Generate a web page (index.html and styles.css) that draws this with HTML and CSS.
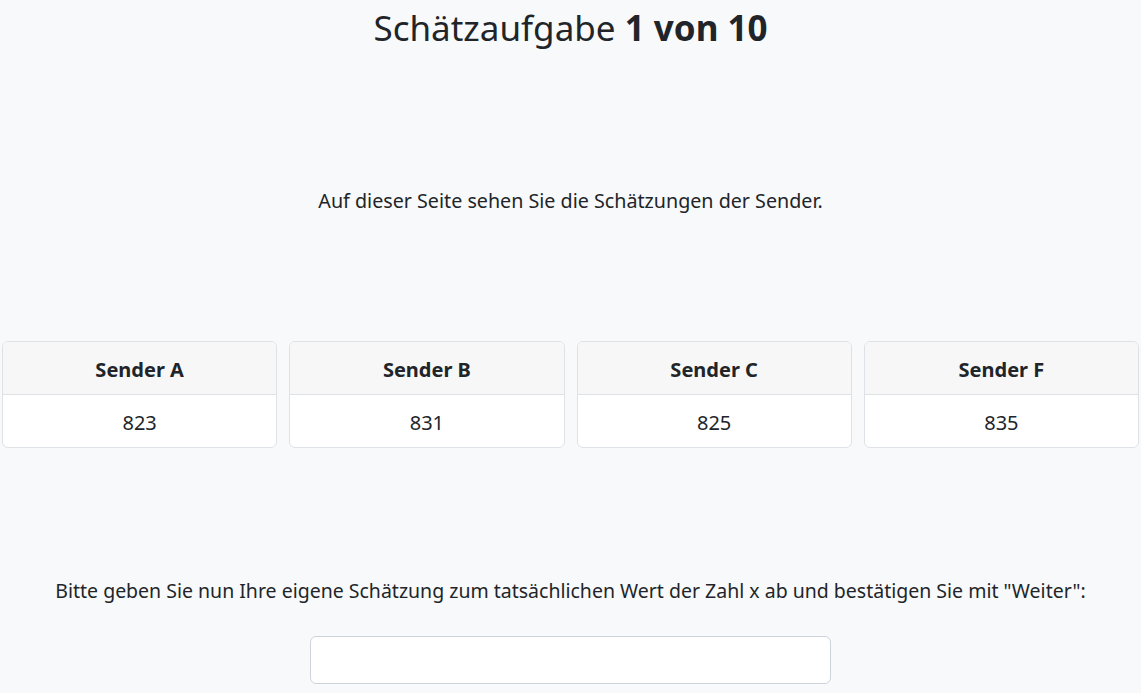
FILE: index.html
```html
<!DOCTYPE html>
<html lang="de">
<head>
<meta charset="utf-8">
<title>Schätzaufgabe</title>
<link rel="stylesheet" href="styles.css">
</head>
<body>
<main class="page">
  <h1 class="title">Schätzaufgabe <b>1 von 10</b></h1>
  <p class="intro">Auf dieser Seite sehen Sie die Schätzungen der Sender.</p>
  <div class="cards">
    <div class="card"><div class="card-head">Sender A</div><div class="card-body">823</div></div>
    <div class="card"><div class="card-head">Sender B</div><div class="card-body">831</div></div>
    <div class="card"><div class="card-head">Sender C</div><div class="card-body">825</div></div>
    <div class="card"><div class="card-head">Sender F</div><div class="card-body">835</div></div>
  </div>
  <p class="prompt">Bitte geben Sie nun Ihre eigene Schätzung zum tatsächlichen Wert der Zahl x ab und bestätigen Sie mit "Weiter":</p>
  <div class="field"><input class="input" type="text"></div>
</main>
</body>
</html>
```
FILE: styles.css
```css
html, body {
  margin: 0;
  padding: 0;
  background: #f8f9fa;
  color: #212529;
  font-family: "Noto Sans", "Open Sans", sans-serif;
}
.page {
  display: flex;
  flex-direction: column;
  align-items: stretch;
  padding: 0 2px;
}
.title {
  margin: 6px 0 0;
  text-align: center;
  font-size: 35px;
  font-weight: 400;
  line-height: 43px;
}
.title b { font-weight: 700; }
.intro {
  margin: 137px 0 0;
  text-align: center;
  font-size: 19.7px;
  line-height: 30px;
}
.cards {
  margin-top: 125px;
  display: grid;
  grid-template-columns: repeat(4, 1fr);
  gap: 12px;
}
.card {
  background: #fff;
  border: 1px solid #dee2e6;
  border-radius: 6px;
  overflow: hidden;
  text-align: center;
  font-size: 20px;
}
.card-head {
  background: #f7f7f7;
  border-bottom: 1px solid #dee2e6;
  font-weight: 700;
  height: 53px;
  line-height: 48px;
  padding-top: 4px;
  box-sizing: border-box;
}
.card-body {
  height: 52px;
  line-height: 48px;
  padding-top: 4px;
  box-sizing: border-box;
}
.prompt {
  margin: 128px 0 0;
  text-align: center;
  font-size: 19.5px;
  line-height: 30px;
}
.field {
  display: flex;
  justify-content: center;
  margin-top: 30px;
}
.input {
  width: 521px;
  height: 48px;
  box-sizing: border-box;
  border: 1px solid #ced4da;
  border-radius: 6px;
  background: #fff;
}
```
